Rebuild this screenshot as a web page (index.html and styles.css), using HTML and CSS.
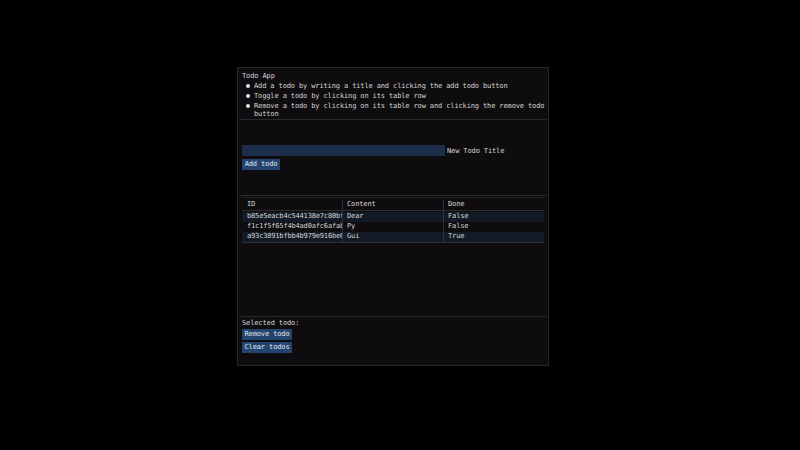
FILE: index.html
```html
<!DOCTYPE html>
<html lang="en">
<head>
<meta charset="utf-8">
<title>Todo App</title>
<link rel="stylesheet" href="styles.css">
</head>
<body>
<main class="window">
  <section class="intro">
    <h1>Todo App</h1>
    <ul>
      <li>Add a todo by writing a title and clicking the add todo button</li>
      <li>Toggle a todo by clicking on its table row</li>
      <li>Remove a todo by clicking on its table row and clicking the remove todo button</li>
    </ul>
  </section>
  <section class="entry">
    <label class="field"><input type="text"><span>New Todo Title</span></label>
    <button class="add">Add todo</button>
  </section>
  <section class="list">
    <div class="table">
      <div class="row head"><span>ID</span><span>Content</span><span>Done</span></div>
      <div class="row odd"><span>b85e5eacb4c544138e7c80bf</span><span>Dear</span><span>False</span></div>
      <div class="row"><span>f1c1f5f65f4b4ad0afc6afab</span><span>Py</span><span>False</span></div>
      <div class="row odd"><span>a93c3891bfbb4b979e916be0</span><span>Gui</span><span>True</span></div>
    </div>
  </section>
  <section class="actions">
    <p>Selected todo:</p>
    <button>Remove todo</button>
    <button>Clear todos</button>
  </section>
</main>
</body>
</html>
```
FILE: styles.css
```css
* { box-sizing: border-box; margin: 0; padding: 0; }
body {
  background: #000;
  color: #d6d6d6;
  height: 450px;
  overflow: hidden;
  padding: 67px 0 0 237px;
  font: 7px/8px "DejaVu Sans Mono", "Liberation Mono", monospace;
  letter-spacing: -0.125px;
  text-rendering: geometricPrecision;
}
.window {
  width: 312px;
  height: 299px;
  background: #0e0c0f;
  border: 1px solid #29292c;
  padding: 0 1px;
  display: flex;
  flex-direction: column;
}
section { padding: 0 3px; border-bottom: 1px solid #29292e; }
.intro { height: 52px; padding-top: 4px; }
h1 { font: inherit; }
ul { list-style: none; padding-top: 1px; }
li { position: relative; height: 10px; padding: 1px 0 0 12px; width: 305px; }
li:last-child { height: 18px; }
li::before {
  content: "";
  position: absolute;
  left: 4px;
  top: 3px;
  width: 4px;
  height: 4px;
  border-radius: 50%;
  background: #e4e4e4;
}
.entry { height: 76px; padding-top: 25px; }
.field { display: flex; align-items: center; gap: 2px; height: 11px; }
input { width: 203px; height: 11px; background: #1c2e49; border: 0; color: inherit; font: inherit; }
button {
  display: block;
  width: 50px;
  height: 11px;
  padding-bottom: 1px;
  border: 0;
  background: #22446f;
  color: #e4e7ec;
  font: inherit;
  letter-spacing: inherit;
  white-space: nowrap;
}
.add { width: 38px; margin-top: 3px; }
.list { height: 121px; padding-top: 1px; }
.table { width: 302px; border-top: 1px solid #222225; border-bottom: 1px solid #29303c; }
.row { display: grid; grid-template-columns: 100px 101px 101px; height: 10px; }
.row span { overflow: hidden; white-space: nowrap; padding-left: 4px; border-left: 1px solid #303035; }
.row span:first-child { border-color: transparent; letter-spacing: -0.17px; margin-right: -1px; }
.head { height: 14px; padding-top: 2px; background: linear-gradient(#2c2c31, #2c2c31) 0 12px / 100% 1px no-repeat; }
.odd { background: #121a25; }
.actions { border: 0; padding-top: 2px; }
.actions button { margin-top: 2px; }
```
